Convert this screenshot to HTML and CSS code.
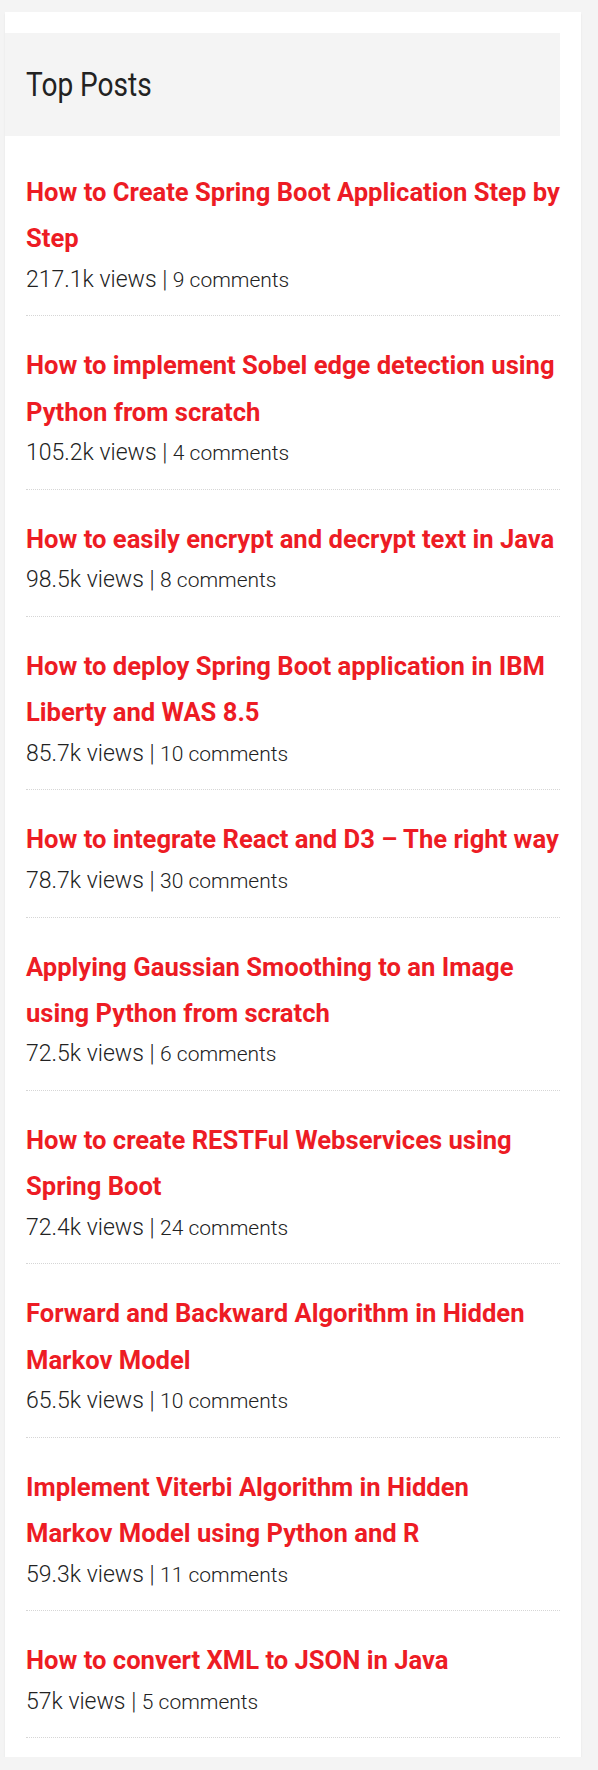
FILE: index.html
```html
<!DOCTYPE html>
<html lang="en">
<head>
<meta charset="utf-8">
<title>Top Posts</title>
<link rel="stylesheet" href="styles.css">
</head>
<body>
<aside class="widget">
  <div class="widget-head"><h2 class="widget-title">Top Posts</h2></div>
  <ul class="posts">
    <li class="post"><a class="post-title" href="#">How to Create Spring Boot Application Step by Step</a><div class="meta"><span class="views">217.1k views | </span><span class="comments">9 comments</span></div></li>
    <li class="post"><a class="post-title" href="#">How to implement Sobel edge detection using Python from scratch</a><div class="meta"><span class="views">105.2k views | </span><span class="comments">4 comments</span></div></li>
    <li class="post"><a class="post-title" href="#">How to easily encrypt and decrypt text in Java</a><div class="meta"><span class="views">98.5k views | </span><span class="comments">8 comments</span></div></li>
    <li class="post"><a class="post-title" href="#">How to deploy Spring Boot application in IBM Liberty and WAS 8.5</a><div class="meta"><span class="views">85.7k views | </span><span class="comments">10 comments</span></div></li>
    <li class="post"><a class="post-title" href="#">How to integrate React and D3 – The right way</a><div class="meta"><span class="views">78.7k views | </span><span class="comments">30 comments</span></div></li>
    <li class="post"><a class="post-title" href="#">Applying Gaussian Smoothing to an Image using Python from scratch</a><div class="meta"><span class="views">72.5k views | </span><span class="comments">6 comments</span></div></li>
    <li class="post"><a class="post-title" href="#">How to create RESTFul Webservices using Spring Boot</a><div class="meta"><span class="views">72.4k views | </span><span class="comments">24 comments</span></div></li>
    <li class="post"><a class="post-title" href="#">Forward and Backward Algorithm in Hidden Markov Model</a><div class="meta"><span class="views">65.5k views | </span><span class="comments">10 comments</span></div></li>
    <li class="post"><a class="post-title" href="#">Implement Viterbi Algorithm in Hidden<br>Markov Model using Python and R</a><div class="meta"><span class="views">59.3k views | </span><span class="comments">11 comments</span></div></li>
    <li class="post"><a class="post-title" href="#">How to convert XML to JSON in Java</a><div class="meta"><span class="views">57k views | </span><span class="comments">5 comments</span></div></li>
  </ul>
</aside>
</body>
</html>
```
FILE: styles.css
```css
html, body {
  margin: 0;
  padding: 0;
  background: #f4f4f4;
}
body {
  font-family: "Roboto", "Liberation Sans", sans-serif;
  color: #222;
  padding-top: 12px;
}
.widget {
  margin-left: 5px;
  width: 576px;
  box-sizing: border-box;
  background: #fff;
  padding: 21px 21px 19px 0;
  box-shadow: 0 2px 2px rgba(0, 0, 0, 0.07);
}
.widget-head {
  background: #f4f4f4;
  height: 103px;
  padding-left: 21px;
}
.widget-title {
  margin: 0;
  display: inline-block;
  font-size: 33px;
  line-height: 103px;
  font-weight: 400;
  color: #222;
  transform: scaleX(0.85);
  transform-origin: left center;
}
.posts {
  list-style: none;
  margin: 0;
  padding: 7px 0 0 21px;
}
.post {
  padding: 26px 0 17.25px 0;
  border-bottom: 1px dotted #d6d6d6;
}
.post-title {
  display: block;
  margin-right: -4px;
  font-size: 25.6px;
  line-height: 46.4px;
  font-weight: 700;
  color: #ed1c24;
  text-decoration: none;
}
.meta {
  font-weight: 300;
  font-size: 23px;
  line-height: 36.4px;
  color: #222;
}
.comments {
  font-size: 21px;
  line-height: 1;
}
```
